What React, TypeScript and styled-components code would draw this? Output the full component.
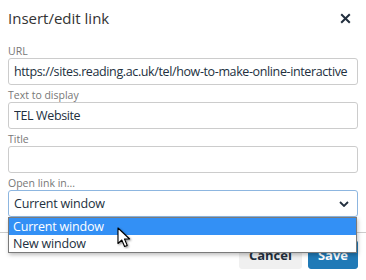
import React, { FC } from "react"
import styled, { createGlobalStyle } from "styled-components"

const GlobalStyle = createGlobalStyle`
	html, body {
		margin: 0;
		padding: 0;
		background: #fff;
	}

	body {
		font-family: "Open Sans", "Noto Sans", sans-serif;
		color: #222f3e;
	}
`

type FieldProps = {
	label: string
	value?: string
}

const Field: FC<FieldProps> = ({ label, value }) => (
	<FieldGroup>
		<Label>{label}</Label>
		<Input readOnly value={value || ""} />
	</FieldGroup>
)

const Chevron: FC = () => (
	<svg width="10" height="6" viewBox="0 0 10 6">
		<path d="M1 1 L5 5 L9 1" fill="none" stroke="#222f3e" strokeWidth="1.8" />
	</svg>
)

const Pointer: FC = () => (
	<svg width="16" height="22" viewBox="0 0 16 22">
		<defs>
			<filter id="sh" x="-30%" y="-30%" width="160%" height="160%">
				<feDropShadow dx="1" dy="1" stdDeviation="0.8" floodOpacity="0.45" />
			</filter>
		</defs>
		<path
			d="M1 1 L1 16.5 L4.8 13 L7.6 19.5 L10.2 18.4 L7.5 12 L12.6 12 Z"
			fill="#fff"
			stroke="#000"
			strokeWidth="1.1"
			strokeLinejoin="round"
			filter="url(#sh)"
		/>
	</svg>
)

const App: FC = () => {
	return (
		<>
			<GlobalStyle />
			<Dialog>
				<Header>
					<Title>Insert/edit link</Title>
					<Close aria-label="Close">
						<svg width="11" height="11" viewBox="0 0 11 11">
							<path d="M1.2 1.2 L9.8 9.8 M9.8 1.2 L1.2 9.8" stroke="#222f3e" strokeWidth="2" />
						</svg>
					</Close>
				</Header>
				<Body>
					<Field label="URL" value="https://sites.reading.ac.uk/tel/how-to-make-online-interactive" />
					<Field label="Text to display" value="TEL Website" />
					<Field label="Title" />
					<FieldGroup>
						<Label>Open link in...</Label>
						<SelectWrap>
							<SelectBox>
								<span>Current window</span>
								<Chevron />
							</SelectBox>
							<Options>
								<Option $active>Current window</Option>
								<Option>New window</Option>
								<Cursor>
									<Pointer />
								</Cursor>
							</Options>
						</SelectWrap>
					</FieldGroup>
				</Body>
				<Footer>
					<Button>Cancel</Button>
					<Button $primary>Save</Button>
				</Footer>
			</Dialog>
		</>
	)
}

export default App

const Dialog = styled.div`
	width: 366px;
	height: 280px;
	overflow: hidden;
	background: #fff;
`

const Header = styled.div`
	height: 36px;
	padding: 0 14px 0 8px;

	display: flex;
	align-items: center;
	justify-content: space-between;
`

const Title = styled.h1`
	margin: 0;

	font-size: 15px;
	font-weight: normal;
	color: #333;
`

const Close = styled.button`
	width: 14px;
	height: 14px;
	padding: 0;

	display: flex;
	align-items: center;
	justify-content: center;

	background: none;
	border: 0;
`

const Body = styled.div`
	padding: 8px 8px 0;
`

const FieldGroup = styled.div`
	margin-bottom: 3px;
`

const Label = styled.div`
	height: 14px;

	font-size: 10.5px;
	line-height: 14px;
	color: #777;
`

const Input = styled.input`
	box-sizing: border-box;
	width: 100%;
	height: 27px;
	padding: 0 3px 0 5px;

	font-family: inherit;
	font-size: 12.5px;
	letter-spacing: -0.38px;
	color: #222f3e;

	border: 1px solid #ccc;
	border-radius: 3px;
	outline: none;
`

const SelectWrap = styled.div`
	position: relative;
`

const SelectBox = styled.div`
	box-sizing: border-box;
	height: 27px;
	padding: 0 8px 0 5px;

	display: flex;
	align-items: center;
	justify-content: space-between;

	font-size: 12.5px;
	letter-spacing: -0.2px;
	color: #222f3e;

	border: 1px solid #8db6e0;
	border-radius: 3px;
`

const Options = styled.div`
	position: absolute;
	top: 27px;
	left: 0;
	right: 1px;
	z-index: 2;

	background: #fff;
	border: 1px solid #7a7a7a;
	box-shadow: 1px 2px 4px rgba(0, 0, 0, 0.25);
`

const Option = styled.div<{ $active?: boolean }>`
	height: 17px;
	padding: 0 4px;

	font-size: 12.5px;
	letter-spacing: -0.2px;
	line-height: 17px;
	color: ${(p) => (p.$active ? "#fff" : "#222f3e")};

	background: ${(p) => (p.$active ? "#3390f5" : "#fff")};
`

const Cursor = styled.div`
	position: absolute;
	top: 9px;
	left: 108px;
	line-height: 0;
`

const Footer = styled.div`
	margin-top: 15px;
	padding: 7px 8px 0;

	display: flex;
	justify-content: flex-end;
	gap: 6px;

	border-top: 1px solid #ccc;
`

const Button = styled.button<{ $primary?: boolean }>`
	height: 29px;
	padding: 0 9px;

	font-family: inherit;
	font-size: 13px;
	font-weight: bold;
	color: ${(p) => (p.$primary ? "#fff" : "#222f3e")};

	background: ${(p) => (p.$primary ? "#207ab7" : "#f0f0f0")};
	border: 1px solid ${(p) => (p.$primary ? "#207ab7" : "#f0f0f0")};
	border-radius: 3px;
`
